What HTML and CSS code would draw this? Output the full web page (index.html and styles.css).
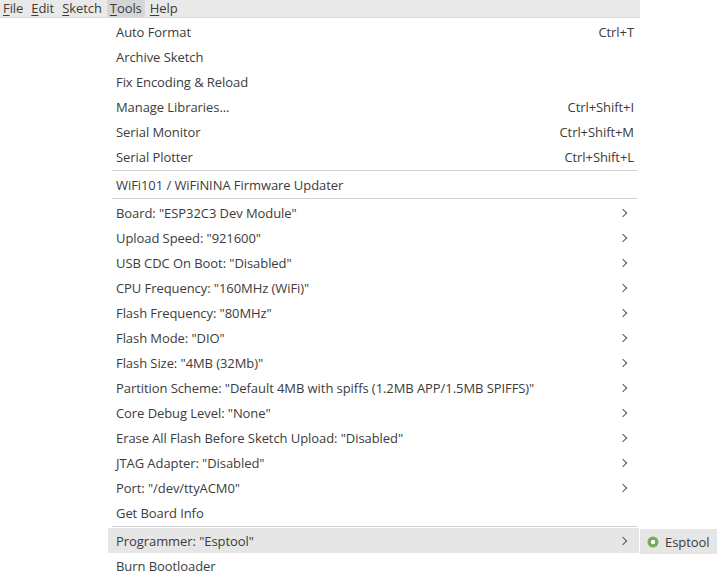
FILE: index.html
```html
<!DOCTYPE html>
<html lang="en">
<head>
    <meta charset="UTF-8">
    <title>Tools menu</title>
    <link rel="stylesheet" href="styles.css">
</head>
<body>
    <div class="menubar">
        <span class="menubar-item"><u>F</u>ile</span>
        <span class="menubar-item"><u>E</u>dit</span>
        <span class="menubar-item"><u>S</u>ketch</span>
        <span class="menubar-item open"><u>T</u>ools</span>
        <span class="menubar-item"><u>H</u>elp</span>
    </div>

    <div class="dropdown">
        <div class="menu-item"><span>Auto Format</span><span class="shortcut">Ctrl+T</span></div>
        <div class="menu-item"><span>Archive Sketch</span></div>
        <div class="menu-item"><span>Fix Encoding &amp; Reload</span></div>
        <div class="menu-item"><span>Manage Libraries...</span><span class="shortcut">Ctrl+Shift+I</span></div>
        <div class="menu-item"><span>Serial Monitor</span><span class="shortcut">Ctrl+Shift+M</span></div>
        <div class="menu-item"><span>Serial Plotter</span><span class="shortcut">Ctrl+Shift+L</span></div>
        <div class="separator"></div>
        <div class="menu-item"><span>WiFi101 / WiFiNINA Firmware Updater</span></div>
        <div class="separator"></div>
        <div class="menu-item sub"><span>Board: "ESP32C3 Dev Module"</span></div>
        <div class="menu-item sub"><span>Upload Speed: "921600"</span></div>
        <div class="menu-item sub"><span>USB CDC On Boot: "Disabled"</span></div>
        <div class="menu-item sub"><span>CPU Frequency: "160MHz (WiFi)"</span></div>
        <div class="menu-item sub"><span>Flash Frequency: "80MHz"</span></div>
        <div class="menu-item sub"><span>Flash Mode: "DIO"</span></div>
        <div class="menu-item sub"><span>Flash Size: "4MB (32Mb)"</span></div>
        <div class="menu-item sub"><span>Partition Scheme: "Default 4MB with spiffs (1.2MB APP/1.5MB SPIFFS)"</span></div>
        <div class="menu-item sub"><span>Core Debug Level: "None"</span></div>
        <div class="menu-item sub"><span>Erase All Flash Before Sketch Upload: "Disabled"</span></div>
        <div class="menu-item sub"><span>JTAG Adapter: "Disabled"</span></div>
        <div class="menu-item sub"><span>Port: "/dev/ttyACM0"</span></div>
        <div class="menu-item"><span>Get Board Info</span></div>
        <div class="separator"></div>
        <div class="menu-item sub active"><span>Programmer: "Esptool"</span></div>
        <div class="menu-item"><span>Burn Bootloader</span></div>
    </div>

    <div class="submenu">
        <div class="menu-item active">
            <svg class="radio" width="12" height="12" viewBox="0 0 12 12">
                <circle cx="6" cy="6" r="5.5" fill="#7aa95c"/>
                <circle cx="6" cy="6" r="2.2" fill="#fff"/>
            </svg>
            <span>Esptool</span>
        </div>
    </div>
</body>
</html>
```

FILE: styles.css
```css
* {
    margin: 0;
    padding: 0;
    box-sizing: border-box;
}

body {
    font-family: "Open Sans", "Noto Sans", sans-serif;
    font-size: 13px;
    letter-spacing: -0.07px;
    color: #3c3c3c;
    background: #fff;
    width: 717px;
    height: 581px;
    position: relative;
    overflow: hidden;
}

.menubar {
    display: flex;
    width: 640px;
    height: 18px;
    background: #e9e9e9;
    border-bottom: 1px solid #dcdcdc;
}

.menubar-item {
    padding: 0 3px;
    margin-right: 2px;
    line-height: 17px;
}

.menubar-item.open {
    background: #d5d5d5;
}

.menubar-item u {
    text-decoration-thickness: 1px;
    text-underline-offset: 2px;
}

/* popup menus float over the editor */
.dropdown {
    position: absolute;
    left: 108px;
    top: 19px;
    width: 531px;
    background: #fff;
}

.menu-item {
    display: flex;
    align-items: center;
    justify-content: space-between;
    height: 25px;
    padding: 0 5px 0 8px;
    white-space: nowrap;
}

.menu-item.active {
    background: #e6e6e6;
}

.menu-item.sub::after {
    content: "";
    width: 5px;
    height: 5px;
    margin-right: 8px;
    border-top: 1px solid #555;
    border-right: 1px solid #555;
    transform: rotate(45deg);
}

.shortcut {
    color: #3c3c3c;
}

.separator {
    height: 1px;
    margin: 1px 2px 1px 4px;
    background: #d2d2d2;
}

.submenu {
    position: absolute;
    left: 640px;
    top: 529px;
    width: 77px;
    background: #e6e6e6;
}

.submenu .menu-item {
    justify-content: flex-start;
    gap: 6px;
    padding-left: 7px;
}
```
